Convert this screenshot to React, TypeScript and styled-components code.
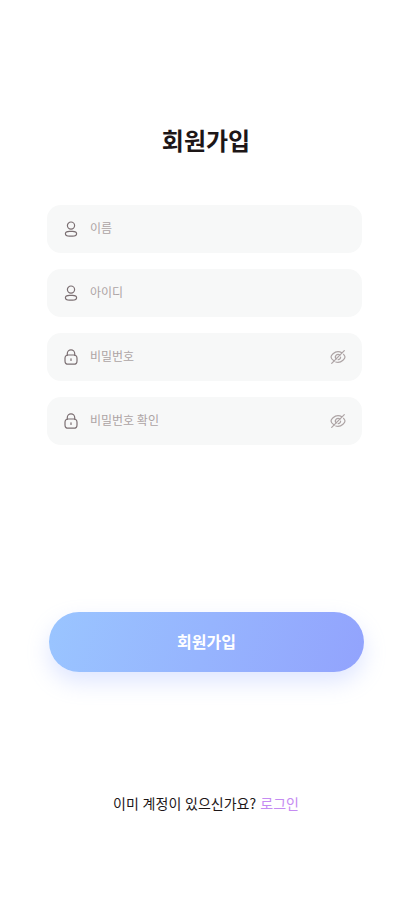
import React from "react";
import styled, { createGlobalStyle } from "styled-components";

const GlobalStyle = createGlobalStyle`
  body {
    margin: 0;
    background: #ffffff;
    font-family: "Noto Sans CJK KR", sans-serif;
  }
  *, *::before, *::after { box-sizing: border-box; }
`;

const Page = styled.main`
  width: 412px;
  height: 917px;
  display: flex;
  flex-direction: column;
  align-items: center;
  overflow: hidden;
  background: #ffffff;
`;

const Title = styled.h1`
  margin: 122px 0 47px;
  height: 36px;
  font-size: 24px;
  line-height: 36px;
  font-weight: 700;
  color: #1d1617;
`;

const Form = styled.form`
  display: flex;
  flex-direction: column;
  gap: 16px;
  width: 315px;
  margin-right: 3px;
`;

const Field = styled.label`
  display: flex;
  align-items: center;
  gap: 10px;
  height: 48px;
  padding: 0 15px;
  border-radius: 14px;
  background: #f7f8f8;
`;

const Input = styled.input`
  flex: 1;
  min-width: 0;
  height: 22px;
  padding: 0 0 4px;
  border: 0;
  outline: 0;
  background: transparent;
  font: 400 12px/18px "Noto Sans CJK KR", sans-serif;
  color: #1d1617;
  &::placeholder { color: #ada4a5; opacity: 1; }
`;

const Icon = styled.svg<{ $tone: string }>`
  flex: none;
  width: 18px;
  height: 18px;
  fill: none;
  stroke: ${(p) => p.$tone};
  stroke-width: 1.2;
  stroke-linecap: round;
  stroke-linejoin: round;
`;

const SubmitButton = styled.button`
  width: 315px;
  height: 60px;
  margin: 167px 0 0 1px;
  padding: 0 0 2px;
  border: 0;
  border-radius: 30px;
  background: linear-gradient(286deg, #92a3fd 0%, #9ac5ff 100%);
  box-shadow: 0 10px 22px rgba(149, 173, 254, 0.3);
  font: 700 16px/24px "Noto Sans CJK KR", sans-serif;
  color: #ffffff;
`;

const Footer = styled.p`
  margin: 121px 0 0;
  font-size: 14px;
  line-height: 21px;
  color: #1d1617;
  word-spacing: 0.65px;
  white-space: nowrap;
`;

const LoginLink = styled.a`
  margin-left: 0.4px;
  color: #c58bf2;
`;

const UserIcon = () => (
  <Icon $tone="#7b6f72" viewBox="0 0 18 18">
    <circle cx="9" cy="5.6" r="3.6" />
    <rect x="3.4" y="11.4" width="11.2" height="4.8" rx="4" ry="2.4" />
  </Icon>
);

const LockIcon = () => (
  <Icon $tone="#7b6f72" viewBox="0 0 18 18">
    <path d="M5.3 7.2V5.5a3.7 3.7 0 0 1 7.4 0v1.7" />
    <rect x="3" y="7" width="12" height="9.2" rx="3.3" />
    <path d="M9 10.8v1.7" />
  </Icon>
);

const HiddenIcon = () => (
  <Icon $tone="#ada4a5" viewBox="0 0 18 18">
    <path d="M5.2 13.1C3.4 11.9 2 9.9 2 9c0-1.4 3.1-5.4 7-5.4 1.5 0 2.8.5 3.9 1.2M14.6 6.3C15.5 7.4 16 8.4 16 9c0 1.4-3.1 5.4-7 5.4-.8 0-1.5-.1-2.2-.4" />
    <path d="M7.2 10.9A2.6 2.6 0 0 1 10.9 7.2M11.6 9.2A2.6 2.6 0 0 1 9.2 11.6" />
    <path d="M15.3 2.7 2.7 15.3" />
  </Icon>
);

const fields = [
  { label: "이름", secret: false },
  { label: "아이디", secret: false },
  { label: "비밀번호", secret: true },
  { label: "비밀번호 확인", secret: true },
];

export default function App() {
  return (
    <>
      <GlobalStyle />
      <Page>
        <Title>회원가입</Title>
        <Form id="signup">
          {fields.map(({ label, secret }) => (
            <Field key={label}>
              {secret ? <LockIcon /> : <UserIcon />}
              <Input type={secret ? "password" : "text"} placeholder={label} />
              {secret && <HiddenIcon />}
            </Field>
          ))}
        </Form>
        <SubmitButton type="submit" form="signup">회원가입</SubmitButton>
        <Footer>
          이미 계정이 있으신가요? <LoginLink>로그인</LoginLink>
        </Footer>
      </Page>
    </>
  );
}
